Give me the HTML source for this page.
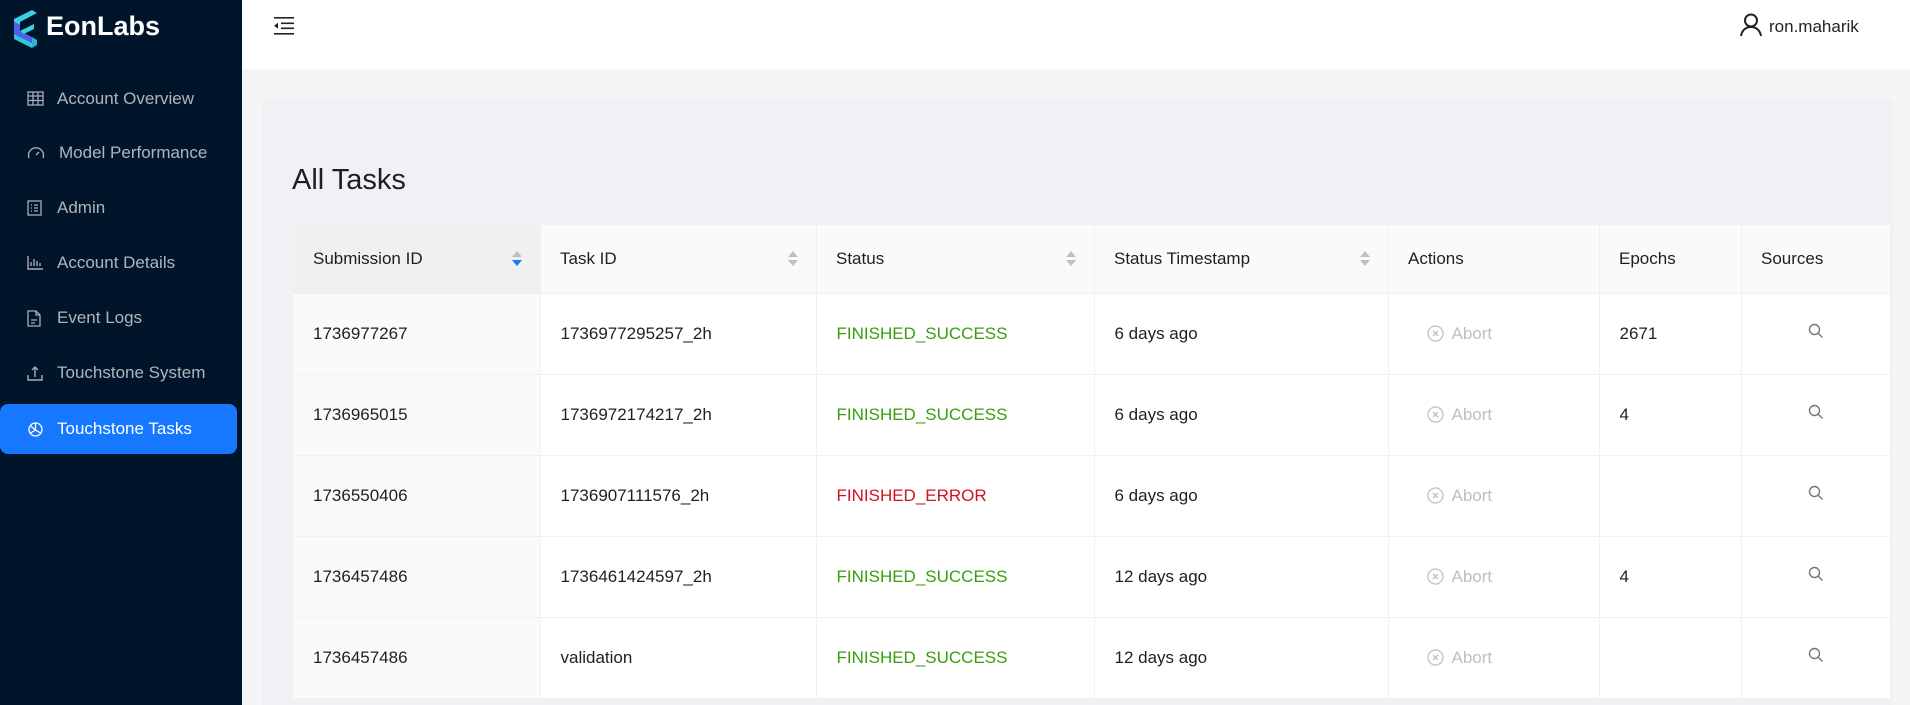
<!DOCTYPE html>
<html><head><meta charset="utf-8"><style>
*{margin:0;padding:0;box-sizing:border-box}
body{width:1910px;height:705px;overflow:hidden;font-family:"Liberation Sans",Roboto,sans-serif;background:#f5f5f5;position:relative;color:rgba(0,0,0,.88)}
.side{position:absolute;left:0;top:0;width:242px;height:705px;background:#001529}
.logo{position:absolute;left:11px;top:9px}
.logotext{position:absolute;left:46px;top:11px;color:#fff;font-size:27px;font-weight:bold;letter-spacing:0}
.mi{position:absolute;left:0;width:237px;height:50px;color:rgba(255,255,255,.68);font-size:17px;line-height:50px;padding-left:57px}
.mi svg{position:absolute;left:27px;top:17px}
.mi.act{background:#1677ff;color:#fff;border-radius:8px;left:0}
.hdr{position:absolute;left:242px;top:0;right:0;height:69px;background:#fff}
.panel{position:absolute;left:262px;top:99px;width:1631px;height:606px;background:#f0f1f5}
h1{position:absolute;left:292px;top:164px;font-size:29px;font-weight:normal;color:rgba(0,0,0,.88)}
table{position:absolute;left:293px;top:225px;border-collapse:collapse;table-layout:fixed;font-size:17px}
th{height:68px;background:#fafafa;font-weight:500;text-align:left;padding-left:20px;border-bottom:1px solid #f0f0f0;position:relative;color:rgba(0,0,0,.88)}
th+th:before{content:"";position:absolute;left:0;top:0;bottom:0;width:1px;background:#f0f0f0}
td{height:81px;background:#fff;padding-left:20px;border-bottom:1px solid #f0f0f0;border-left:1px solid #f0f0f0}
td:first-child{background:#fafafa;border-left:none}
th:first-child{background:#f0f0f0;border-top-left-radius:8px}
.s{position:absolute;right:18px;top:26px;width:10px}
.s i{display:block;width:0;height:0;border-left:5px solid transparent;border-right:5px solid transparent;margin-bottom:3px}
.up{border-bottom:6px solid #bfbfbf}.dn{border-top:6px solid #bfbfbf}
.g{color:#389e0d}.r{color:#cf1322}
.ab{color:#bfbfbf;padding-left:38px}
.ab svg{vertical-align:-3px;margin-right:8px}
.c{text-align:center;padding-left:0}
</style></head><body>
<div class="side">
<svg class="logo" width="28" height="40" viewBox="0 0 26 40"><path d="M2 10 L20 1 L25 4 L8 13 L8 16 L2 13Z" fill="#3ecfe0"/><path d="M2 13 L8 16 L8 22 L20 28 L20 34 L2 25Z" fill="#4a63e6"/><path d="M8 22 L22 15 L22 20 L12 25Z" fill="#3ecfe0"/><path d="M20 28 L25 31 L25 36 L20 39Z" fill="#2bb5d0"/><path d="M2 25 L20 34 L20 39 L2 30Z" fill="#30c6dd"/></svg>
<div class="logotext">EonLabs</div>
<div class="mi" style="top:74px"><svg width="17" height="15" viewBox="0 0 17 15" fill="none" stroke="#aab" stroke-width="1.3"><rect x="1" y="1" width="15" height="13"/><path d="M1 5h15M1 9.5h15M6 1v13M11 1v13"/></svg>Account Overview</div>
<div class="mi" style="top:128px;padding-left:59px"><svg width="18" height="15" viewBox="0 0 18 15" fill="none" stroke="#aab" stroke-width="1.4"><path d="M2 13A7.5 7.5 0 1 1 16 13"/><path d="M9 10l3-3"/></svg>Model Performance</div>
<div class="mi" style="top:183px"><svg width="15" height="16" viewBox="0 0 15 16" fill="none" stroke="#aab" stroke-width="1.3"><rect x="1" y="1" width="13" height="14"/><path d="M4 5h1M7 5h4M4 8h1M7 8h4M4 11h1M7 11h4"/></svg>Admin</div>
<div class="mi" style="top:238px"><svg width="16" height="15" viewBox="0 0 16 15" fill="none" stroke="#aab" stroke-width="1.4"><path d="M1 1v13h15M4 11V7M7 11V4M10 11V6M13 11V8"/></svg>Account Details</div>
<div class="mi" style="top:293px"><svg width="14" height="17" viewBox="0 0 14 17" fill="none" stroke="#aab" stroke-width="1.3"><path d="M1 1h8l4 4v11H1z M9 1v4h4M4 10h6M4 13h4"/></svg>Event Logs</div>
<div class="mi" style="top:348px"><svg width="16" height="16" viewBox="0 0 16 16" fill="none" stroke="#aab" stroke-width="1.4"><path d="M1 10v5h14v-5M8 12V2M5 5l3-3 3 3"/></svg>Touchstone System</div>
<div class="mi act" style="top:404px"><svg width="17" height="17" viewBox="0 0 17 17" fill="none" stroke="#fff" stroke-width="1.3"><circle cx="8.5" cy="8.5" r="6.5"/><path d="M8.5 2v7l5 3M8.5 9l-5 3M3.5 5l5 4"/></svg>Touchstone Tasks</div>
</div>
<div class="hdr">
<svg style="position:absolute;left:31px;top:17px" width="21" height="18" viewBox="0 0 21 18" fill="#222"><rect x="1" y="0" width="20" height="1.6"/><rect x="8" y="5.5" width="13" height="1.6"/><rect x="8" y="10.5" width="13" height="1.6"/><rect x="1" y="16" width="20" height="1.6"/><path d="M1 8.8l4-3v6z"/></svg>
<svg style="position:absolute;left:1498px;top:13px" width="22" height="24" viewBox="0 0 22 24" fill="none" stroke="#222" stroke-width="2"><circle cx="11" cy="7.5" r="6"/><path d="M1 23c1-6 5-9 10-9s9 3 10 9"/></svg>
<div style="position:absolute;left:1527px;top:17px;font-size:17px;color:#222">ron.maharik</div>
</div>
<div class="panel"></div>
<h1>All Tasks</h1>
<table>
<colgroup><col style="width:247px"><col style="width:276px"><col style="width:278px"><col style="width:294px"><col style="width:211px"><col style="width:142px"><col style="width:149px"></colgroup>
<tr><th>Submission ID<div class="s"><i class="up"></i><i class="dn" style="border-top-color:#1677ff"></i></div></th><th>Task ID<div class="s"><i class="up"></i><i class="dn"></i></div></th><th>Status<div class="s"><i class="up"></i><i class="dn"></i></div></th><th>Status Timestamp<div class="s"><i class="up"></i><i class="dn"></i></div></th><th>Actions</th><th>Epochs</th><th>Sources</th></tr>
<tr><td>1736977267</td><td>1736977295257_2h</td><td class="g">FINISHED_SUCCESS</td><td>6 days ago</td><td class="ab"><svg width="17" height="17" viewBox="0 0 17 17" fill="none" stroke="#bfbfbf" stroke-width="1.3"><circle cx="8.5" cy="8.5" r="7.5"/><path d="M6 6l5 5M11 6l-5 5"/></svg>Abort</td><td>2671</td><td class="c"><svg width="16" height="16" viewBox="0 0 16 16" fill="none" stroke="#777" stroke-width="1.4"><circle cx="6.5" cy="6.5" r="5"/><path d="M10 10l4.5 4.5"/></svg></td></tr>
<tr><td>1736965015</td><td>1736972174217_2h</td><td class="g">FINISHED_SUCCESS</td><td>6 days ago</td><td class="ab"><svg width="17" height="17" viewBox="0 0 17 17" fill="none" stroke="#bfbfbf" stroke-width="1.3"><circle cx="8.5" cy="8.5" r="7.5"/><path d="M6 6l5 5M11 6l-5 5"/></svg>Abort</td><td>4</td><td class="c"><svg width="16" height="16" viewBox="0 0 16 16" fill="none" stroke="#777" stroke-width="1.4"><circle cx="6.5" cy="6.5" r="5"/><path d="M10 10l4.5 4.5"/></svg></td></tr>
<tr><td>1736550406</td><td>1736907111576_2h</td><td class="r">FINISHED_ERROR</td><td>6 days ago</td><td class="ab"><svg width="17" height="17" viewBox="0 0 17 17" fill="none" stroke="#bfbfbf" stroke-width="1.3"><circle cx="8.5" cy="8.5" r="7.5"/><path d="M6 6l5 5M11 6l-5 5"/></svg>Abort</td><td></td><td class="c"><svg width="16" height="16" viewBox="0 0 16 16" fill="none" stroke="#777" stroke-width="1.4"><circle cx="6.5" cy="6.5" r="5"/><path d="M10 10l4.5 4.5"/></svg></td></tr>
<tr><td>1736457486</td><td>1736461424597_2h</td><td class="g">FINISHED_SUCCESS</td><td>12 days ago</td><td class="ab"><svg width="17" height="17" viewBox="0 0 17 17" fill="none" stroke="#bfbfbf" stroke-width="1.3"><circle cx="8.5" cy="8.5" r="7.5"/><path d="M6 6l5 5M11 6l-5 5"/></svg>Abort</td><td>4</td><td class="c"><svg width="16" height="16" viewBox="0 0 16 16" fill="none" stroke="#777" stroke-width="1.4"><circle cx="6.5" cy="6.5" r="5"/><path d="M10 10l4.5 4.5"/></svg></td></tr>
<tr><td>1736457486</td><td>validation</td><td class="g">FINISHED_SUCCESS</td><td>12 days ago</td><td class="ab"><svg width="17" height="17" viewBox="0 0 17 17" fill="none" stroke="#bfbfbf" stroke-width="1.3"><circle cx="8.5" cy="8.5" r="7.5"/><path d="M6 6l5 5M11 6l-5 5"/></svg>Abort</td><td></td><td class="c"><svg width="16" height="16" viewBox="0 0 16 16" fill="none" stroke="#777" stroke-width="1.4"><circle cx="6.5" cy="6.5" r="5"/><path d="M10 10l4.5 4.5"/></svg></td></tr>
</table>
</body></html>
